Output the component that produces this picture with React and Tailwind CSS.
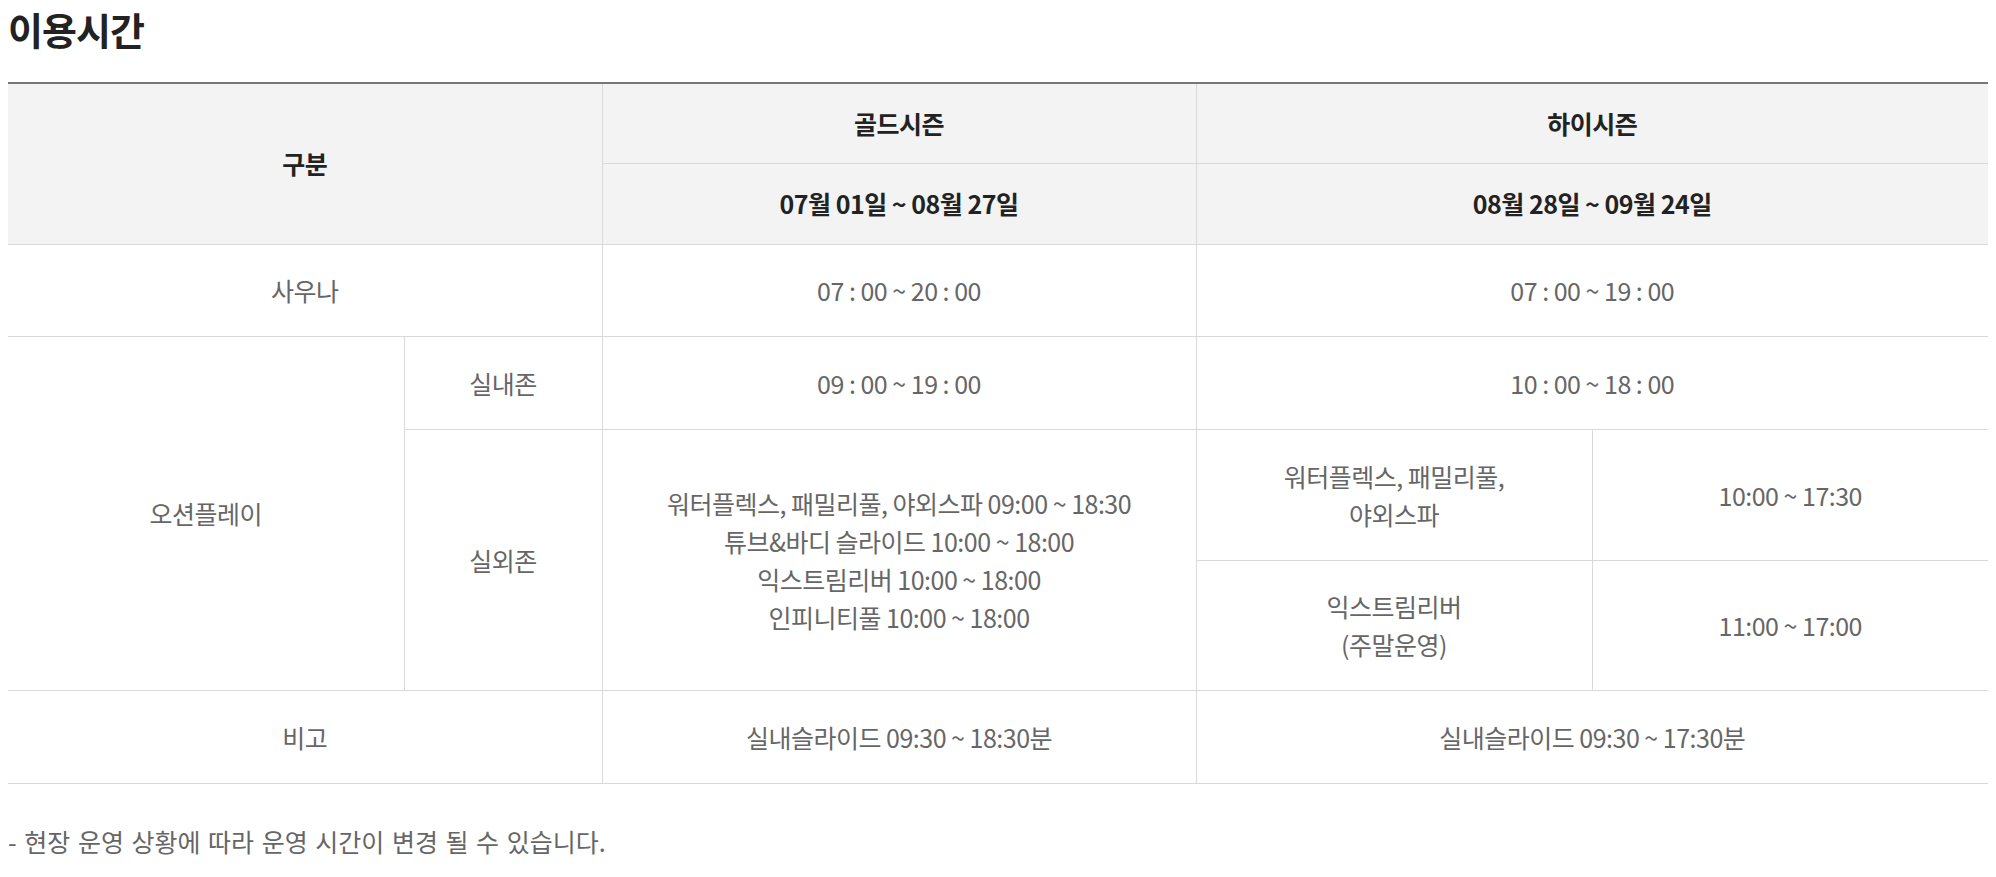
const font = { fontFamily: '"Noto Sans CJK KR", "Noto Sans", sans-serif' };

function Th({ children, className = "", ...rest }) {
  return (
    <th
      className={`border border-[#d9d9d9] bg-[#f3f3f3] text-[25px] font-bold text-[#222] text-center align-middle tracking-[-0.5px] ${className}`}
      {...rest}
    >
      {children}
    </th>
  );
}

function Td({ children, className = "", ...rest }) {
  return (
    <td
      className={`border border-[#d9d9d9] text-[25px] text-[#666] text-center align-middle leading-[38px] tracking-[-0.5px] ${className}`}
      {...rest}
    >
      {children}
    </td>
  );
}

export default function App() {
  return (
    <div className="bg-white px-2 pt-[4px] pb-8" style={font}>
      <h2 className="text-[38px] font-bold text-[#222] leading-[50px] tracking-[-1px] mb-[28px]">이용시간</h2>

      <table className="w-full border-collapse table-fixed border-t-2 border-t-[#777]">
        <colgroup>
          <col className="w-[20%]" />
          <col className="w-[10%]" />
          <col className="w-[30%]" />
          <col className="w-[20%]" />
          <col className="w-[20%]" />
        </colgroup>
        <thead>
          <tr className="h-[80px]">
            <Th rowSpan={2} colSpan={2} className="border-l-0 border-t-0">구분</Th>
            <Th className="border-t-0">골드시즌</Th>
            <Th colSpan={2} className="border-r-0 border-t-0">하이시즌</Th>
          </tr>
          <tr className="h-[81px]">
            <Th>07월 01일 ~ 08월 27일</Th>
            <Th colSpan={2} className="border-r-0">08월 28일 ~ 09월 24일</Th>
          </tr>
        </thead>
        <tbody>
          <tr className="h-[92px]">
            <Td colSpan={2} className="border-l-0">사우나</Td>
            <Td>07 : 00 ~ 20 : 00</Td>
            <Td colSpan={2} className="border-r-0">07 : 00 ~ 19 : 00</Td>
          </tr>
          <tr className="h-[93px]">
            <Td rowSpan={3} className="border-l-0">오션플레이</Td>
            <Td>실내존</Td>
            <Td>09 : 00 ~ 19 : 00</Td>
            <Td colSpan={2} className="border-r-0">10 : 00 ~ 18 : 00</Td>
          </tr>
          <tr className="h-[131px]">
            <Td rowSpan={2}>실외존</Td>
            <Td rowSpan={2}>
              워터플렉스, 패밀리풀, 야외스파 09:00 ~ 18:30
              <br />
              튜브&amp;바디 슬라이드 10:00 ~ 18:00
              <br />
              익스트림리버 10:00 ~ 18:00
              <br />
              인피니티풀 10:00 ~ 18:00
            </Td>
            <Td>
              워터플렉스, 패밀리풀,
              <br />
              야외스파
            </Td>
            <Td className="border-r-0">10:00 ~ 17:30</Td>
          </tr>
          <tr className="h-[130px]">
            <Td>
              익스트림리버
              <br />
              (주말운영)
            </Td>
            <Td className="border-r-0">11:00 ~ 17:00</Td>
          </tr>
          <tr className="h-[93px]">
            <Td colSpan={2} className="border-l-0">비고</Td>
            <Td>실내슬라이드 09:30 ~ 18:30분</Td>
            <Td colSpan={2} className="border-r-0">실내슬라이드 09:30 ~ 17:30분</Td>
          </tr>
        </tbody>
      </table>

      <p className="mt-[40px] text-[25px] text-[#666] leading-[34px] [word-spacing:2px]">
        - 현장 운영 상황에 따라 운영 시간이 변경 될 수 있습니다.
      </p>
    </div>
  );
}
